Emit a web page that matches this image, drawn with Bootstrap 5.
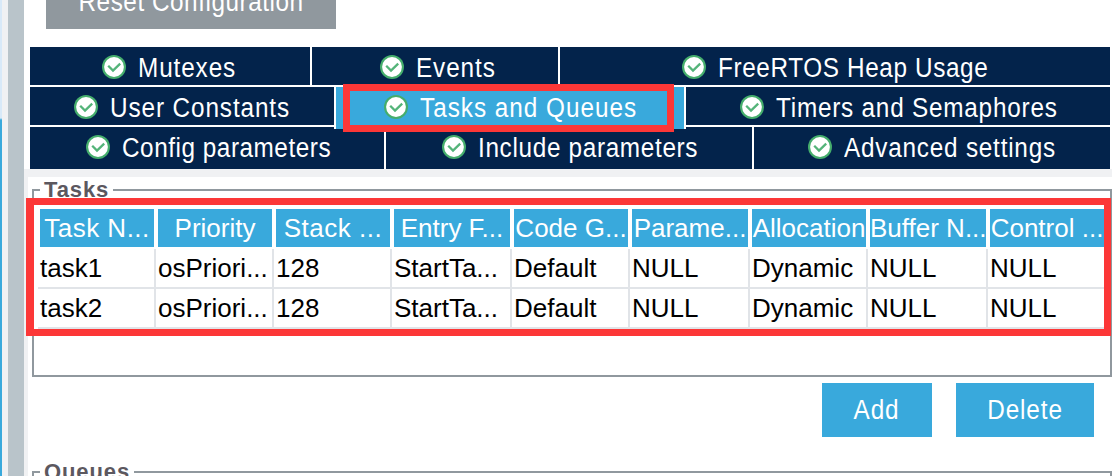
<!DOCTYPE html>
<html lang="en">
<head>
<meta charset="utf-8">
<title>FreeRTOS configuration</title>
<link href="https://cdn.jsdelivr.net/npm/bootstrap@5.3.0/dist/css/bootstrap.min.css" rel="stylesheet">
<script src="https://cdn.jsdelivr.net/npm/bootstrap@5.3.0/dist/js/bootstrap.bundle.min.js"></script>
<style>
  :root { --navy:#03234b; --sky:#39a9dc; --line:#90989e; --pale:#f0f1f3; --alert:#fc3737; }
  body { font-family:"Liberation Sans",Arial,sans-serif; font-size:26px; line-height:38px; color:#000; background:#fff; }
  .app { height:476px; }
  .edge { width:2px; background:linear-gradient(#d8e9f8 118px,var(--sky) 120px); }
  .gutter { width:6px; background:var(--pale); }
  .splitter { width:16px; background:#b9c4ca; }
  .top-area { height:169px; padding:0 2px 0 6px; }
  .btn-flat { border:0; border-radius:0; padding:0; color:#fff; font-size:inherit; background:var(--sky); height:54px; line-height:54px; }
  .btn-flat:hover { background:var(--sky); color:#fff; }
  .btn-reset { background:var(--line); width:290px; height:54px; margin:-25px 0 18px 16px; }
  .btn-reset:hover { background:var(--line); }
  .btn-reset .tracked { letter-spacing:.6px; }
  .btn-add { width:110px; } .btn-del { width:138px; }
  /* narrow, widely tracked lettering */
  .tracked { display:inline-block; font-size:27px; letter-spacing:1px; white-space:nowrap; transform:scaleX(.9); transform-origin:0 50%; }
  .center-x { transform-origin:50% 50%; }
  .tabs { gap:2px; }
  .tab-row { gap:2px; height:38px; }
  .tab-row.last { height:42px; }
  .tab-item { background:var(--navy); color:#fff; overflow:hidden; height:100%; flex:none; }
  .tab-item svg { width:24px; height:24px; margin:8px 12px 0 0; flex:none; }
  .tab-item .tracked { padding-top:2px; }
  .tab-item.active { background:var(--sky); height:42px; position:relative; z-index:1; overflow:visible; box-shadow:-2px 0 #fff,2px 0 #fff; }
  .t1{width:280px;padding-left:72px} .t2{width:246px;padding-left:68px} .t3{width:550px;padding-left:122px}
  .t4{width:304px;padding-left:44px} .t5{width:348px;padding-left:48px} .t6{width:424px;padding-left:54px}
  .t7{width:354px;padding-left:56px} .t8{width:366px;padding-left:56px} .t9{width:356px;padding-left:54px}
  .t3 .tracked{letter-spacing:.7px} .t7 .tracked{letter-spacing:.6px} .t8 .tracked{letter-spacing:.75px}
  .t6 .tracked,.t9 .tracked{letter-spacing:.87px} .t5 .tracked{letter-spacing:1.1px}
  .frame { position:absolute; border:7px solid var(--alert); z-index:3; pointer-events:none; }
  .frame-tab { left:7px; top:-3px; width:331px; height:48px; }
  .frame-table { left:-8px; top:7px; width:1085px; height:138px; border-left-width:8px; }
  .lower { border-top:8px solid var(--pale); border-left:4px solid var(--pale); padding:12px 0 0 4px; height:307px; }
  .group { position:relative; border:2px solid var(--line); height:188px; }
  .group-title { position:absolute; left:6px; top:-13px; padding:0 4px; height:24px; background:#fff; font-size:22px; font-weight:bold; letter-spacing:.9px; line-height:24px; color:#5c585f; white-space:nowrap; }
  .task-table { width:1066px; table-layout:fixed; border-collapse:separate; border-spacing:0; margin:16px 0 0 4px; }
  .task-table th { height:42px; padding:0; font-weight:400; color:#fff; text-align:center; border:2px solid #fff; background:var(--sky); background-clip:padding-box; line-height:38px; white-space:nowrap; overflow:hidden; }
  .task-table th:last-child { border-right:0; }
  .task-table th.loose { letter-spacing:.5px; }
  .task-table td { height:40px; padding:0 0 0 2px; border-right:2px solid #e1e4e8; border-bottom:2px solid #e1e4e8; line-height:38px; white-space:nowrap; overflow:hidden; }
  .task-table td:last-child { border-right:0; }
  .c118 { width:118px; } .c120 { width:120px; } .c116 { width:116px; }
  .actions { gap:24px; padding:6px 18px 0 0; height:94px; }
</style>
</head>
<body class="overflow-hidden">
<svg class="d-none">
  <symbol id="ok" viewBox="0 0 24 24">
    <circle cx="12" cy="12" r="12" fill="#45ad6c"/><circle cx="12" cy="12" r="9.9" fill="#fff"/>
    <path d="M6.2 10.8 11 15.6 18.2 8.6" fill="none" stroke="#54b479" stroke-width="2.3"/>
  </symbol>
</svg>
<div class="app d-flex overflow-hidden">
  <div class="edge flex-shrink-0"></div><div class="gutter flex-shrink-0"></div><div class="splitter flex-shrink-0"></div>
  <main class="flex-grow-1">
    <section class="top-area d-flex flex-column">
      <button class="btn btn-flat btn-reset flex-shrink-0"><span class="tracked center-x">Reset Configuration</span></button>
      <nav class="tabs d-flex flex-column">
        <div class="tab-row d-flex">
          <div class="tab-item t1 d-flex"><svg><use href="#ok"/></svg><span class="tracked">Mutexes</span></div>
          <div class="tab-item t2 d-flex"><svg><use href="#ok"/></svg><span class="tracked">Events</span></div>
          <div class="tab-item t3 d-flex"><svg><use href="#ok"/></svg><span class="tracked">FreeRTOS Heap Usage</span></div>
        </div>
        <div class="tab-row d-flex">
          <div class="tab-item t4 d-flex"><svg><use href="#ok"/></svg><span class="tracked">User Constants</span></div>
          <div class="tab-item t5 active d-flex"><svg><use href="#ok"/></svg><span class="tracked">Tasks and Queues</span><i class="frame frame-tab"></i></div>
          <div class="tab-item t6 d-flex"><svg><use href="#ok"/></svg><span class="tracked">Timers and Semaphores</span></div>
        </div>
        <div class="tab-row last d-flex">
          <div class="tab-item t7 d-flex"><svg><use href="#ok"/></svg><span class="tracked">Config parameters</span></div>
          <div class="tab-item t8 d-flex"><svg><use href="#ok"/></svg><span class="tracked">Include parameters</span></div>
          <div class="tab-item t9 d-flex"><svg><use href="#ok"/></svg><span class="tracked">Advanced settings</span></div>
        </div>
      </nav>
    </section>
    <section class="lower">
      <div class="group">
        <span class="group-title">Tasks</span>
        <i class="frame frame-table"></i>
        <table class="task-table">
          <colgroup><col class="c118"><col class="c118"><col class="c118"><col class="c120"><col class="c118"><col class="c120"><col class="c118"><col class="c120"><col class="c116"></colgroup>
          <thead><tr><th class="loose">Task N...</th><th>Priority</th><th class="loose">Stack ...</th><th>Entry F...</th><th>Code G...</th><th>Parame...</th><th>Allocation</th><th>Buffer N...</th><th>Control ...</th></tr></thead>
          <tbody>
            <tr><td>task1</td><td>osPriori...</td><td>128</td><td>StartTa...</td><td>Default</td><td>NULL</td><td>Dynamic</td><td>NULL</td><td>NULL</td></tr>
            <tr><td>task2</td><td>osPriori...</td><td>128</td><td>StartTa...</td><td>Default</td><td>NULL</td><td>Dynamic</td><td>NULL</td><td>NULL</td></tr>
          </tbody>
        </table>
      </div>
      <div class="actions d-flex justify-content-end">
        <button class="btn btn-flat btn-add"><span class="tracked center-x">Add</span></button>
        <button class="btn btn-flat btn-del"><span class="tracked center-x">Delete</span></button>
      </div>
      <div class="group"><span class="group-title">Queues</span></div>
    </section>
  </main>
</div>
</body>
</html>
